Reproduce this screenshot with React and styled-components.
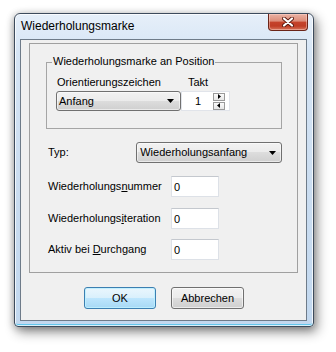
import React from "react";
import styled, { createGlobalStyle } from "styled-components";

const Global = createGlobalStyle`
  html, body { margin: 0; padding: 0; background: #ffffff; }
  body { font-family: "Liberation Sans", Arial, sans-serif; font-size: 11px; color: #000; }
  * { box-sizing: border-box; }
`;

const Stage = styled.div`
  width: 336px;
  height: 352px;
  padding: 13px 0 0 14px;
`;

const Window = styled.div`
  width: 300px;
  height: 314px;
  display: flex;
  flex-direction: column;
  padding: 0 6px 5px 5px;
  border: 1px solid #3d4b5c;
  border-radius: 6px 6px 4px 4px;
  background: linear-gradient(180deg, #e6eff9 0%, #d6e5f5 12%, #c9dcf0 60%, #c2d8ef 100%);
  box-shadow: inset 0 0 0 1px rgba(255, 255, 255, 0.75), inset 0 -2px 0 #63c6ec,
    3px 5px 12px rgba(0, 0, 0, 0.45), -1px 1px 7px rgba(0, 0, 0, 0.22);
`;

const TitleBar = styled.div`
  height: 25px;
  display: flex;
  align-items: flex-start;
  justify-content: space-between;
`;

const Title = styled.div`
  font-size: 12px;
  line-height: 14px;
  padding: 5px 0 0 1px;
  color: #000;
`;

const CloseButton = styled.div`
  width: 40px;
  height: 17px;
  margin-right: -1px;
  border: 1px solid #6a2418;
  border-top: none;
  border-radius: 0 0 4px 4px;
  background: linear-gradient(180deg, #eab2a4 0%, #dc8c78 45%, #c5432b 50%, #bf3d25 75%, #d8745b 100%);
  box-shadow: inset 0 0 0 1px rgba(255, 220, 210, 0.45);
  display: flex;
  align-items: center;
  justify-content: center;
`;

const Client = styled.div`
  flex: 1;
  border: 1px solid #6e7b89;
  background: #f0f0f0;
  padding: 3px 8px 11px 8px;
  display: flex;
  flex-direction: column;
`;

const Panel = styled.div`
  height: 230px;
  border: 1px solid #a0a0a0;
  padding: 18px 15px 12px 16px;
  display: flex;
  flex-direction: column;
`;

const Group = styled.div`
  position: relative;
  height: 67px;
  border: 1px solid #a5a5a5;
  padding: 13px 0 0 9px;
`;

const Legend = styled.span`
  position: absolute;
  left: 5px;
  top: -8px;
  padding: 0 1px;
  line-height: 13px;
  background: #f0f0f0;
`;

const GroupGrid = styled.div`
  display: grid;
  grid-template-columns: 125px 49px;
  grid-template-rows: 13px 20px;
  row-gap: 2px;
`;

const Label = styled.span`
  line-height: 13px;
  padding-left: ${(p) => p.$indent || 1}px;
  white-space: nowrap;
`;

const Combo = styled.div`
  height: ${(p) => p.$h || 20}px;
  width: ${(p) => p.$w}px;
  border: 1px solid #707070;
  border-radius: 3px;
  background: linear-gradient(180deg, #f2f2f2 0%, #ebebeb 50%, #dddddd 50%, #cfcfcf 100%);
  box-shadow: inset 0 0 0 1px rgba(255, 255, 255, 0.55);
  display: flex;
  align-items: center;
  justify-content: space-between;
  padding: 0 ${(p) => p.$arrowPad || 4}px 0 ${(p) => p.$textPad || 2}px;
`;

const ComboText = styled.span`
  line-height: 13px;
`;

const Spin = styled.div`
  height: 20px;
  background: #ffffff;
  border: 1px solid #e1e4ea;
  display: flex;
  align-items: center;
  padding: 0 4px 0 13px;
`;

const SpinText = styled.span`
  flex: 1;
  line-height: 13px;
`;

const SpinButtons = styled.div`
  width: 12px;
  display: flex;
  flex-direction: column;
  gap: 1px;
`;

const SpinButton = styled.div`
  height: 8px;
  border: 1px solid #9a9a9a;
  background: linear-gradient(180deg, #fbfbfb 0%, #e6e6e6 100%);
  display: flex;
  align-items: center;
  justify-content: center;
`;

const Row = styled.div`
  display: flex;
  align-items: center;
  height: 21px;
  margin-top: ${(p) => p.$mt}px;
`;

const RowLabel = styled.span`
  width: ${(p) => p.$w}px;
  padding-left: 2px;
  line-height: 13px;
  white-space: nowrap;
`;

const Edit = styled.div`
  width: 48px;
  height: 21px;
  background: #ffffff;
  border: 1px solid #dde1e7;
  border-top-color: #c4c8ce;
  padding-left: 2px;
  display: flex;
  align-items: center;
`;

const ButtonRow = styled.div`
  display: flex;
  gap: 15px;
  margin-top: 14px;
  padding-left: 55px;
`;

const Button = styled.div`
  width: ${(p) => p.$w}px;
  height: 22px;
  border: 1px solid ${(p) => (p.$default ? "#3c7fb1" : "#707070")};
  border-radius: 3px;
  background: ${(p) =>
    p.$default
      ? "linear-gradient(180deg, #eaf6fd 0%, #d9f0fc 50%, #bee6fd 50%, #a7d9f5 100%)"
      : "linear-gradient(180deg, #f2f2f2 0%, #ebebeb 50%, #dddddd 50%, #cfcfcf 100%)"};
  box-shadow: inset 0 0 0 1px ${(p) => (p.$default ? "rgba(190, 240, 255, 0.9)" : "rgba(255,255,255,0.6)")};
  display: flex;
  align-items: center;
  justify-content: center;
  line-height: 13px;
`;

const DownArrow = () => (
  <svg width="7" height="4" viewBox="0 0 7 4">
    <path d="M0 0 H7 L3.5 4 Z" fill="#000" />
  </svg>
);

const SpinArrow = ({ dir }) => (
  <svg width="4" height="5" viewBox="0 0 4 5">
    {dir === "right" ? (
      <path d="M1 0 L4 2.5 L1 5 Z" fill="#000" />
    ) : (
      <path d="M3 0 L0 2.5 L3 5 Z" fill="#000" />
    )}
  </svg>
);

const CloseIcon = () => (
  <svg width="12" height="10" viewBox="0 0 12 10">
    <path d="M2 1.5 L10 8.5 M10 1.5 L2 8.5" stroke="#5b1a10" strokeWidth="4" strokeLinecap="round" />
    <path d="M2 1.5 L10 8.5 M10 1.5 L2 8.5" stroke="#ffffff" strokeWidth="2.2" strokeLinecap="round" />
  </svg>
);

export default function App() {
  return (
    <>
      <Global />
      <Stage>
        <Window>
          <TitleBar>
            <Title>Wiederholungsmarke</Title>
            <CloseButton>
              <CloseIcon />
            </CloseButton>
          </TitleBar>
          <Client>
            <Panel>
              <Group>
                <Legend>Wiederholungsmarke an Position</Legend>
                <GroupGrid>
                  <Label>Orientierungszeichen</Label>
                  <Label $indent={7}>Takt</Label>
                  <Combo $w={125} $textPad={2} $arrowPad={6}>
                    <ComboText>Anfang</ComboText>
                    <DownArrow />
                  </Combo>
                  <Spin>
                    <SpinText>1</SpinText>
                    <SpinButtons>
                      <SpinButton>
                        <SpinArrow dir="right" />
                      </SpinButton>
                      <SpinButton>
                        <SpinArrow dir="left" />
                      </SpinButton>
                    </SpinButtons>
                  </Spin>
                </GroupGrid>
              </Group>
              <Row $mt={13}>
                <RowLabel $w={91}>Typ:</RowLabel>
                <Combo $w={147} $h={21} $textPad={3} $arrowPad={5}>
                  <ComboText>Wiederholungsanfang</ComboText>
                  <DownArrow />
                </Combo>
              </Row>
              <Row $mt={13}>
                <RowLabel $w={125}>
                  Wiederholungs<u>n</u>ummer
                </RowLabel>
                <Edit>0</Edit>
              </Row>
              <Row $mt={11}>
                <RowLabel $w={125}>
                  Wiederholungs<u>i</u>teration
                </RowLabel>
                <Edit>0</Edit>
              </Row>
              <Row $mt={10}>
                <RowLabel $w={125}>
                  Aktiv bei <u>D</u>urchgang
                </RowLabel>
                <Edit>0</Edit>
              </Row>
            </Panel>
            <ButtonRow>
              <Button $w={72} $default>
                OK
              </Button>
              <Button $w={73}>Abbrechen</Button>
            </ButtonRow>
          </Client>
        </Window>
      </Stage>
    </>
  );
}
